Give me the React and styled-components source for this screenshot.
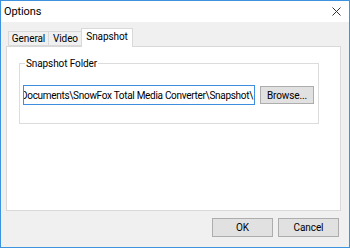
import styled, { createGlobalStyle } from "styled-components";

const GlobalStyle = createGlobalStyle`
    html, body {
        margin: 0;
        padding: 0;
        background: #ffffff;
    }
    * {
        box-sizing: border-box;
    }
`;

const Window = styled.div`
    width: 350px;
    height: 248px;
    border: 1px solid #3d93de;
    display: flex;
    flex-direction: column;
    font-family: Roboto, "Noto Sans", sans-serif;
    font-size: 10px;
    letter-spacing: -0.1px;
    color: #000;
    overflow: hidden;
`;

const TitleBar = styled.div`
    height: 21px;
    flex-shrink: 0;
    background: #ffffff;
    display: flex;
    align-items: center;
    justify-content: space-between;
    padding: 0 8px 0 3px;
    font-size: 11px;
`;

const CloseIcon = styled.svg`
    width: 9px;
    height: 9px;
    display: block;
`;

const Body = styled.div`
    flex: 1;
    background: #f0f0f0;
    display: flex;
    flex-direction: column;
    padding: 6px 8px 0 5px;
`;

const TabStrip = styled.div`
    display: flex;
    align-items: flex-end;
    height: 18px;
    padding-left: 2px;
    position: relative;
    z-index: 1;
`;

const Tab = styled.div`
    height: ${(p) => (p.$active ? "19px" : "15px")};
    margin-left: ${(p) => (p.$active ? "-2px" : "0")};
    margin-bottom: ${(p) => (p.$active ? "-1px" : "0")};
    width: ${(p) => p.$w}px;
    flex-shrink: 0;
    display: flex;
    align-items: flex-start;
    justify-content: center;
    padding-top: ${(p) => (p.$active ? "2px" : "1px")};
    border: 1px solid #d9d9d9;
    border-bottom: ${(p) => (p.$active ? "none" : "1px solid #d9d9d9")};
    border-left: ${(p) => (p.$first || p.$active ? "1px solid #d9d9d9" : "none")};
    background: ${(p) => (p.$active ? "#ffffff" : "#f0f0f0")};
    white-space: nowrap;
`;

const Panel = styled.div`
    height: 165px;
    background: #ffffff;
    border: 1px solid #d9d9d9;
    padding: 11px 21px 0 12px;
`;

const GroupBox = styled.fieldset`
    margin: 0;
    border: 1px solid #dcdcdc;
    padding: 16px 3px 18px 3px;
    min-width: 0;
`;

const Legend = styled.legend`
    padding: 0 1px;
    margin-left: 2px;
    color: #000;
`;

const Row = styled.div`
    display: flex;
    align-items: center;
    gap: 5px;
`;

const PathField = styled.div`
    width: 232px;
    height: 20px;
    border: 1px solid #3d8ee0;
    background: #ffffff;
    display: flex;
    justify-content: flex-end;
    align-items: center;
    overflow: hidden;
    white-space: nowrap;
    padding-right: 1px;
    letter-spacing: -0.3px;
`;

const Button = styled.div`
    width: ${(p) => p.$w}px;
    height: ${(p) => p.$h}px;
    background: #e1e1e1;
    border: 1px solid #adadad;
    display: flex;
    align-items: center;
    justify-content: center;
`;

const Footer = styled.div`
    display: flex;
    justify-content: flex-end;
    gap: 5px;
    padding-top: 7px;
    padding-right: 2px;
`;

export default function App() {
    return (
        <>
            <GlobalStyle />
            <Window>
                <TitleBar>
                    <span>Options</span>
                    <CloseIcon viewBox="0 0 9 9">
                        <path d="M0.5 0.5 L8.5 8.5 M8.5 0.5 L0.5 8.5" stroke="#333" strokeWidth="1" fill="none" />
                    </CloseIcon>
                </TitleBar>
                <Body>
                    <TabStrip>
                        <Tab $first $w={41}>General</Tab>
                        <Tab $w={34}>Video</Tab>
                        <Tab $active $w={52}>Snapshot</Tab>
                    </TabStrip>
                    <Panel>
                        <GroupBox>
                            <Legend>Snapshot Folder</Legend>
                            <Row>
                                <PathField>C:\Users\Softpedia\Documents\SnowFox Total Media Converter\Snapshot\</PathField>
                                <Button $w={54} $h={18}>Browse...</Button>
                            </Row>
                        </GroupBox>
                    </Panel>
                    <Footer>
                        <Button $w={61} $h={19}>OK</Button>
                        <Button $w={61} $h={19}>Cancel</Button>
                    </Footer>
                </Body>
            </Window>
        </>
    );
}
